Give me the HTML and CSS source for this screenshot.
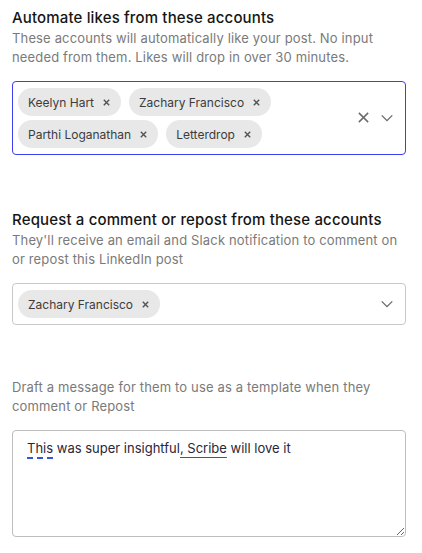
FILE: index.html
```html
<!DOCTYPE html>
<html lang="en">
<head>
<meta charset="utf-8">
<link rel="stylesheet" href="styles.css">
</head>
<body>
<div class="page">
  <section class="section">
    <h2 class="title">Automate likes from these accounts</h2>
    <p class="desc">These accounts will automatically like your post. No input needed from them. Likes will drop in over 30 minutes.</p>
    <div class="select select-focused">
      <div class="chips">
        <span class="chip"><span class="chip-label">Keelyn Hart</span><svg class="chip-x" viewBox="0 0 10 10"><path d="M2 2L8 8M8 2L2 8"/></svg></span>
        <span class="chip"><span class="chip-label">Zachary Francisco</span><svg class="chip-x" viewBox="0 0 10 10"><path d="M2 2L8 8M8 2L2 8"/></svg></span>
        <span class="chip"><span class="chip-label">Parthi Loganathan</span><svg class="chip-x" viewBox="0 0 10 10"><path d="M2 2L8 8M8 2L2 8"/></svg></span>
        <span class="chip"><span class="chip-label">Letterdrop</span><svg class="chip-x" viewBox="0 0 10 10"><path d="M2 2L8 8M8 2L2 8"/></svg></span>
      </div>
      <div class="indicators">
        <svg class="ind-clear" viewBox="0 0 14 14"><path d="M2 2L12 12M12 2L2 12"/></svg>
        <svg class="ind-chevron" viewBox="0 0 16 16"><path d="M2 5L8 11L14 5"/></svg>
      </div>
    </div>
  </section>

  <section class="section">
    <h2 class="title">Request a comment or repost from these accounts</h2>
    <p class="desc">They'll receive an email and Slack notification to comment on or repost this LinkedIn post</p>
    <div class="select">
      <div class="chips">
        <span class="chip"><span class="chip-label">Zachary Francisco</span><svg class="chip-x" viewBox="0 0 10 10"><path d="M2 2L8 8M8 2L2 8"/></svg></span>
      </div>
      <div class="indicators">
        <svg class="ind-chevron" viewBox="0 0 16 16"><path d="M2 5L8 11L14 5"/></svg>
      </div>
    </div>
  </section>

  <section class="section section-draft">
    <p class="desc">Draft a message for them to use as a template when they comment or Repost</p>
    <div class="textarea"><span class="grammar">This</span> was super insightful<span class="spell">, Scribe</span> will love it</div>
  </section>
</div>
</body>
</html>
```

FILE: styles.css
```css
* { box-sizing: border-box; }
html, body { margin: 0; padding: 0; background: #fff; }
body {
  font-family: "Inter", "Open Sans", sans-serif;
  color: #222;
}
.page {
  padding: 8px 16px 0 12px;
  display: flex;
  flex-direction: column;
  gap: 55px;
}
.section { display: flex; flex-direction: column; }
.title {
  margin: 0;
  font-size: 15px;
  line-height: 20px;
  font-weight: 500;
  letter-spacing: 0.15px;
  color: #151515;
}
.desc {
  margin: 1px 0 0;
  font-size: 13px;
  line-height: 19px;
  letter-spacing: 0.15px;
  color: #7a7a7a;
}
.select {
  margin-top: 14px;
  border: 1px solid #c8c8c8;
  border-radius: 4px;
  display: flex;
  align-items: center;
  padding: 5px 0 6px 5px;
}
.select-focused { border-color: #3d3df2; }
.chips {
  flex: 1;
  display: flex;
  flex-wrap: wrap;
  gap: 4px 8px;
  padding-top: 1px;
}
.chip {
  height: 28px;
  border-radius: 14px;
  background: #e8e8e8;
  display: inline-flex;
  align-items: center;
  padding: 0 10px 0 10px;
  gap: 8px;
  font-size: 12px;
  color: #3c3c3c;
}
.chip-x { width: 9px; height: 9px; stroke: #555; stroke-width: 1.6; fill: none; }
.indicators {
  display: flex;
  align-items: center;
  gap: 10px;
  padding-right: 11px;
}
.ind-clear { width: 13px; height: 13px; stroke: #6b6b6b; stroke-width: 1.6; fill: none; }
.ind-chevron { width: 14px; height: 14px; stroke: #6b6b6b; stroke-width: 1.6; fill: none; }
.section-draft { margin-top: -2px; }
.section-draft .desc { margin-top: 0; }
.textarea {
  margin-top: 14px;
  height: 107px;
  border: 1px solid #bdbdbd;
  border-radius: 4px;
  padding: 8px 14px;
  font-size: 13px;
  line-height: 18px;
  color: #2a2638;
  resize: vertical;
  overflow: auto;
}
.grammar {
  text-decoration: underline dashed #3355dd;
  text-decoration-thickness: 2px;
  text-underline-offset: 4px;
}
.spell {
  text-decoration: underline solid #cc2233;
  text-underline-offset: 4px;
}
```
